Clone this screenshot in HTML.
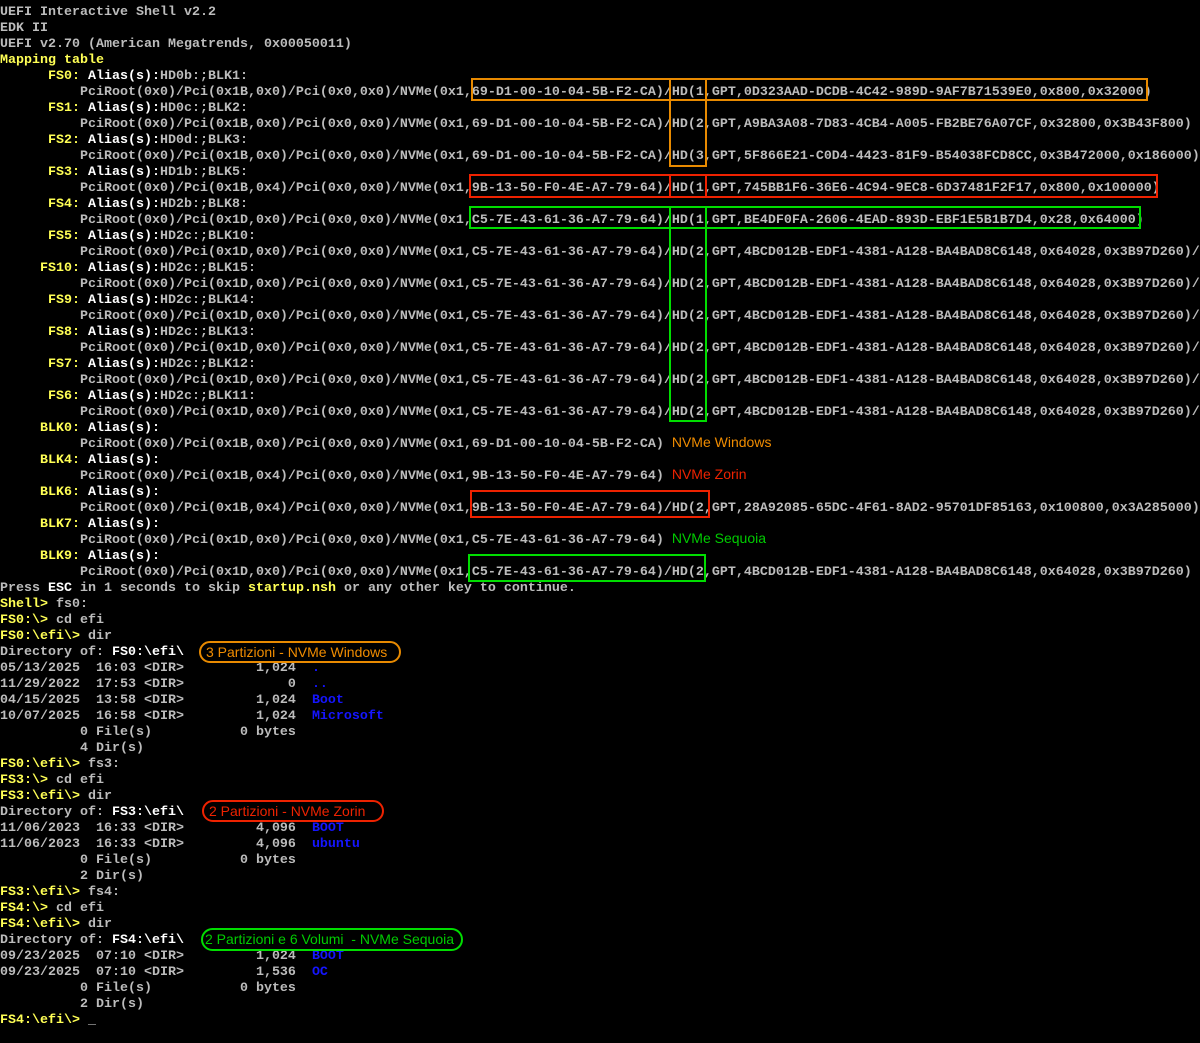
<!DOCTYPE html>
<html><head><meta charset="utf-8"><style>
html,body{margin:0;padding:0;background:#000;width:1200px;height:1043px;overflow:hidden;position:relative}
pre{margin:0;padding:5px 0 0 0;font-family:"Liberation Mono",monospace;font-size:13.33px;line-height:16px;color:#bcbcbc;white-space:pre;font-weight:bold}
.y{color:#ffff55}.w{color:#fff}.b{color:#1515ff}
.a{font-family:"Liberation Sans",Arial,sans-serif;font-weight:normal;font-size:14px;line-height:0}
.o{color:#f08c00}.r{color:#ee2200}.g{color:#00cc00}
.bx{position:absolute;border:2px solid;box-sizing:border-box}
.pill{position:absolute;border:2px solid;border-radius:12px;box-sizing:border-box;font-family:"Liberation Sans",Arial,sans-serif;font-size:14px;line-height:18px;padding-left:5px;white-space:nowrap}
</style></head><body>
<pre>UEFI Interactive Shell v2.2
EDK II
UEFI v2.70 (American Megatrends, 0x00050011)
<span class="y">Mapping table</span>
      <span class="y">FS0:</span> <span class="w">Alias(s):</span>HD0b:;BLK1:
          PciRoot(0x0)/Pci(0x1B,0x0)/Pci(0x0,0x0)/NVMe(0x1,69-D1-00-10-04-5B-F2-CA)/HD(1,GPT,0D323AAD-DCDB-4C42-989D-9AF7B71539E0,0x800,0x32000)
      <span class="y">FS1:</span> <span class="w">Alias(s):</span>HD0c:;BLK2:
          PciRoot(0x0)/Pci(0x1B,0x0)/Pci(0x0,0x0)/NVMe(0x1,69-D1-00-10-04-5B-F2-CA)/HD(2,GPT,A9BA3A08-7D83-4CB4-A005-FB2BE76A07CF,0x32800,0x3B43F800)
      <span class="y">FS2:</span> <span class="w">Alias(s):</span>HD0d:;BLK3:
          PciRoot(0x0)/Pci(0x1B,0x0)/Pci(0x0,0x0)/NVMe(0x1,69-D1-00-10-04-5B-F2-CA)/HD(3,GPT,5F866E21-C0D4-4423-81F9-B54038FCD8CC,0x3B472000,0x186000)
      <span class="y">FS3:</span> <span class="w">Alias(s):</span>HD1b:;BLK5:
          PciRoot(0x0)/Pci(0x1B,0x4)/Pci(0x0,0x0)/NVMe(0x1,9B-13-50-F0-4E-A7-79-64)/HD(1,GPT,745BB1F6-36E6-4C94-9EC8-6D37481F2F17,0x800,0x100000)
      <span class="y">FS4:</span> <span class="w">Alias(s):</span>HD2b:;BLK8:
          PciRoot(0x0)/Pci(0x1D,0x0)/Pci(0x0,0x0)/NVMe(0x1,C5-7E-43-61-36-A7-79-64)/HD(1,GPT,BE4DF0FA-2606-4EAD-893D-EBF1E5B1B7D4,0x28,0x64000)
      <span class="y">FS5:</span> <span class="w">Alias(s):</span>HD2c:;BLK10:
          PciRoot(0x0)/Pci(0x1D,0x0)/Pci(0x0,0x0)/NVMe(0x1,C5-7E-43-61-36-A7-79-64)/HD(2,GPT,4BCD012B-EDF1-4381-A128-BA4BAD8C6148,0x64028,0x3B97D260)/
     <span class="y">FS10:</span> <span class="w">Alias(s):</span>HD2c:;BLK15:
          PciRoot(0x0)/Pci(0x1D,0x0)/Pci(0x0,0x0)/NVMe(0x1,C5-7E-43-61-36-A7-79-64)/HD(2,GPT,4BCD012B-EDF1-4381-A128-BA4BAD8C6148,0x64028,0x3B97D260)/
      <span class="y">FS9:</span> <span class="w">Alias(s):</span>HD2c:;BLK14:
          PciRoot(0x0)/Pci(0x1D,0x0)/Pci(0x0,0x0)/NVMe(0x1,C5-7E-43-61-36-A7-79-64)/HD(2,GPT,4BCD012B-EDF1-4381-A128-BA4BAD8C6148,0x64028,0x3B97D260)/
      <span class="y">FS8:</span> <span class="w">Alias(s):</span>HD2c:;BLK13:
          PciRoot(0x0)/Pci(0x1D,0x0)/Pci(0x0,0x0)/NVMe(0x1,C5-7E-43-61-36-A7-79-64)/HD(2,GPT,4BCD012B-EDF1-4381-A128-BA4BAD8C6148,0x64028,0x3B97D260)/
      <span class="y">FS7:</span> <span class="w">Alias(s):</span>HD2c:;BLK12:
          PciRoot(0x0)/Pci(0x1D,0x0)/Pci(0x0,0x0)/NVMe(0x1,C5-7E-43-61-36-A7-79-64)/HD(2,GPT,4BCD012B-EDF1-4381-A128-BA4BAD8C6148,0x64028,0x3B97D260)/
      <span class="y">FS6:</span> <span class="w">Alias(s):</span>HD2c:;BLK11:
          PciRoot(0x0)/Pci(0x1D,0x0)/Pci(0x0,0x0)/NVMe(0x1,C5-7E-43-61-36-A7-79-64)/HD(2,GPT,4BCD012B-EDF1-4381-A128-BA4BAD8C6148,0x64028,0x3B97D260)/
     <span class="y">BLK0:</span> <span class="w">Alias(s):</span>
          PciRoot(0x0)/Pci(0x1B,0x0)/Pci(0x0,0x0)/NVMe(0x1,69-D1-00-10-04-5B-F2-CA) <span class="a o">NVMe Windows</span>
     <span class="y">BLK4:</span> <span class="w">Alias(s):</span>
          PciRoot(0x0)/Pci(0x1B,0x4)/Pci(0x0,0x0)/NVMe(0x1,9B-13-50-F0-4E-A7-79-64) <span class="a r">NVMe Zorin</span>
     <span class="y">BLK6:</span> <span class="w">Alias(s):</span>
          PciRoot(0x0)/Pci(0x1B,0x4)/Pci(0x0,0x0)/NVMe(0x1,9B-13-50-F0-4E-A7-79-64)/HD(2,GPT,28A92085-65DC-4F61-8AD2-95701DF85163,0x100800,0x3A285000)
     <span class="y">BLK7:</span> <span class="w">Alias(s):</span>
          PciRoot(0x0)/Pci(0x1D,0x0)/Pci(0x0,0x0)/NVMe(0x1,C5-7E-43-61-36-A7-79-64) <span class="a g">NVMe Sequoia</span>
     <span class="y">BLK9:</span> <span class="w">Alias(s):</span>
          PciRoot(0x0)/Pci(0x1D,0x0)/Pci(0x0,0x0)/NVMe(0x1,C5-7E-43-61-36-A7-79-64)/HD(2,GPT,4BCD012B-EDF1-4381-A128-BA4BAD8C6148,0x64028,0x3B97D260)
Press <span class="w">ESC</span> in 1 seconds to skip <span class="y">startup.nsh</span> or any other key to continue.
<span class="y">Shell&gt;</span> fs0:
<span class="y">FS0:\&gt;</span> cd efi
<span class="y">FS0:\efi\&gt;</span> dir
Directory of: <span class="w">FS0:\efi\</span>
05/13/2025  16:03 &lt;DIR&gt;         1,024  <span class="b">.</span>
11/29/2022  17:53 &lt;DIR&gt;             0  <span class="b">..</span>
04/15/2025  13:58 &lt;DIR&gt;         1,024  <span class="b">Boot</span>
10/07/2025  16:58 &lt;DIR&gt;         1,024  <span class="b">Microsoft</span>
          0 File(s)           0 bytes
          4 Dir(s)
<span class="y">FS0:\efi\&gt;</span> fs3:
<span class="y">FS3:\&gt;</span> cd efi
<span class="y">FS3:\efi\&gt;</span> dir
Directory of: <span class="w">FS3:\efi\</span>
11/06/2023  16:33 &lt;DIR&gt;         4,096  <span class="b">BOOT</span>
11/06/2023  16:33 &lt;DIR&gt;         4,096  <span class="b">ubuntu</span>
          0 File(s)           0 bytes
          2 Dir(s)
<span class="y">FS3:\efi\&gt;</span> fs4:
<span class="y">FS4:\&gt;</span> cd efi
<span class="y">FS4:\efi\&gt;</span> dir
Directory of: <span class="w">FS4:\efi\</span>
09/23/2025  07:10 &lt;DIR&gt;         1,024  <span class="b">BOOT</span>
09/23/2025  07:10 &lt;DIR&gt;         1,536  <span class="b">OC</span>
          0 File(s)           0 bytes
          2 Dir(s)
<span class="y">FS4:\efi\&gt;</span> _</pre>

<div class="bx" style="border-color:#e88a00;left:471px;top:78px;width:677px;height:23px"></div>
<div class="bx" style="border-color:#e88a00;left:669px;top:78px;width:38px;height:89px"></div>
<div class="bx" style="border-color:#ee2200;left:469px;top:174px;width:689px;height:24px"></div>
<div class="bx" style="border-color:#ee2200;left:669px;top:174px;width:38px;height:24px"></div>
<div class="bx" style="border-color:#00dd00;left:469px;top:206px;width:672px;height:23px"></div>
<div class="bx" style="border-color:#00dd00;left:669px;top:206px;width:38px;height:216px"></div>
<div class="bx" style="border-color:#ee2200;left:470px;top:490px;width:240px;height:28px"></div>
<div class="bx" style="border-color:#00dd00;left:468px;top:554px;width:238px;height:28px"></div>

<div class="pill o" style="border-color:#e88a00;left:199px;top:641px;width:202px;height:22px">3 Partizioni - NVMe Windows</div>
<div class="pill r" style="border-color:#ee2200;left:202px;top:800px;width:182px;height:22px">2 Partizioni - NVMe Zorin</div>
<div class="pill g" style="border-color:#00dd00;left:201px;top:928px;width:262px;height:23px;padding-left:2px">2 Partizioni e 6 Volumi&nbsp; - NVMe Sequoia</div>
</body></html>
